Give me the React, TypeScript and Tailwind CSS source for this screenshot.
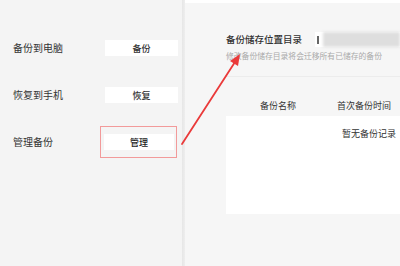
import React from 'react';

const font = { fontFamily: '"Noto Sans CJK SC", "Noto Sans", sans-serif' };

const rows = [
  { label: '备份到电脑', action: '备份' },
  { label: '恢复到手机', action: '恢复' },
];

const App = () => {
  return (
    <div className="relative flex h-[266px] w-[400px] overflow-hidden bg-[#f4f4f4] text-[#333]" style={font}>
      {/* left settings column */}
      <div className="flex w-[182px] flex-col gap-[31px] pt-[40px]">
        {rows.map((row) => (
          <div key={row.label} className="flex h-[16px] items-center pl-[13px]">
            <span className="w-[92px] text-[10px] leading-none">{row.label}</span>
            <button className="h-[16px] w-[73px] bg-white text-[9px] font-medium leading-none text-[#333]">
              {row.action}
            </button>
          </div>
        ))}
        <div className="flex h-[16px] items-center pl-[13px]">
          <span className="w-[91px] text-[10px] leading-none">管理备份</span>
          <div className="relative flex">
            <button className="h-[16px] w-[70px] bg-white text-[9px] font-medium leading-none text-[#222]">
              管理
            </button>
            <div className="absolute left-[-4px] top-[-8px] h-[32px] w-[77px] border border-[#f29a9a]" />
          </div>
        </div>
      </div>

      {/* column divider */}
      <div className="w-[3px] bg-gradient-to-r from-[#e6e6e6] to-[#eeeeee]" />

      {/* right panel */}
      <div className="flex flex-1 flex-col border-t-[3px] border-white bg-[#f6f6f6] pl-[41px]">
        <div className="mt-[29px] flex h-[15px] items-center">
          <span className="w-[89px] text-[9.5px] font-medium leading-none text-[#333]">备份储存位置目录</span>
          <div className="flex h-[15px] flex-1 items-center bg-white pl-[2px]">
            <span className="h-[8px] w-[1.5px] bg-[#666] blur-[0.5px]" />
            <div className="ml-[4px] h-[15px] flex-1 bg-[#dedede] blur-[1.5px]" />
          </div>
        </div>
        <div className="mt-[5px] text-[7.8px] leading-none text-[#aaa]">修改备份储存目录将会迁移所有已储存的备份</div>
        <div className="mt-[16px] h-px bg-[#ececec]" />
        <div className="mt-[23px] flex h-[12px] items-center text-[9px] leading-none text-[#333]">
          <span className="ml-[34px] w-[77px]">备份名称</span>
          <span>首次备份时间</span>
        </div>
        <div className="mt-[4px] h-[98px] bg-white pt-[13px]">
          <div className="pl-[116px] text-[9px] leading-none text-[#333]">暂无备份记录</div>
        </div>
      </div>

      {/* annotation arrow */}
      <svg className="pointer-events-none absolute left-0 top-0" width="400" height="266" viewBox="0 0 400 266">
        <line x1="182" y1="144" x2="235" y2="62" stroke="#ea3a3a" strokeWidth="1.8" strokeLinecap="round" />
        <polygon points="240,54 230,61 238,66" fill="#ea3a3a" />
      </svg>
    </div>
  );
};

export default App;
